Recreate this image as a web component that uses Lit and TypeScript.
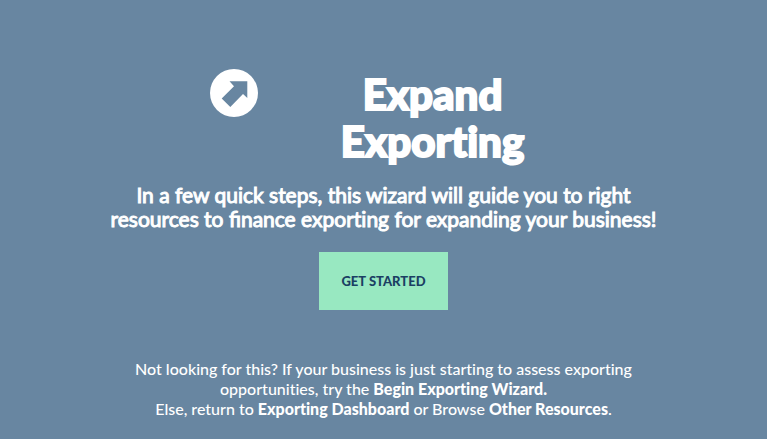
import { LitElement, html, css } from "lit";
import { customElement } from "lit/decorators.js";

@customElement("app-root")
export class AppRoot extends LitElement {
  static styles = css`
    :host {
      display: block;
      box-sizing: border-box;
      min-height: 100vh;
      padding: 69px 24px 20px;
      background: #6886a1;
      color: #fff;
      font-family: Lato, "Liberation Sans", sans-serif;
      font-variant-ligatures: none;
      text-align: center;
    }
    .heading {
      display: flex;
      justify-content: center;
      align-items: flex-start;
      gap: 80px;
      padding-right: 30px;
    }
    .icon {
      width: 48px;
      height: 48px;
      flex: none;
    }
    h1 {
      margin: 0;
      padding-top: 2px;
      font-size: 42px;
      line-height: 47px;
      font-weight: 900;
      max-width: 190px;
      -webkit-text-stroke: 2px currentColor;
    }
    .lead {
      margin: 18px auto 0;
      max-width: 560px;
      font-size: 21px;
      line-height: 24px;
      font-weight: 400;
      -webkit-text-stroke: 1px currentColor;
    }
    .joined {
      font-variant-ligatures: normal;
    }
    .start {
      margin: 21px 0 0;
      width: 129px;
      height: 58px;
      border: 0;
      padding: 0;
      background: #98e8c1;
      color: #1b3f63;
      font: 900 13px/20px Lato, "Liberation Sans", sans-serif;
      text-transform: uppercase;
      cursor: pointer;
    }
    .more {
      margin: 49px auto 0;
      max-width: 510px;
      font-family: "Lato Medium", Lato, "Liberation Sans", sans-serif;
      font-size: 16px;
      line-height: 20px;
    }
    a {
      color: inherit;
      font-family: "Lato Black", Lato, "Liberation Sans", sans-serif;
      font-weight: 900;
      text-decoration: none;
    }
  `;

  render() {
    return html`
      <main>
        <header class="heading">
          <svg class="icon" viewBox="0 0 48 48" aria-hidden="true">
            <circle cx="24" cy="24" r="24" fill="#fff" />
            <path d="M19.5 12.3H37.3V29L33 25L20.3 38L11.7 29.5L24 17.3Z" fill="#6886a1" />
          </svg>
          <h1>Expand Exporting</h1>
        </header>
        <p class="lead">
          In a few quick steps, this wizard will guide you to right resources to
          <span class="joined">finance</span> exporting for expanding your business!
        </p>
        <button class="start" type="button">Get started</button>
        <p class="more">
          Not looking for this? If your business is just starting to assess
          exporting opportunities, try the <a href="#begin">Begin Exporting Wizard.</a><br />
          Else, return to <a href="#dashboard">Exporting Dashboard</a> or Browse
          <a href="#resources">Other Resources</a>.
        </p>
      </main>
    `;
  }
}
